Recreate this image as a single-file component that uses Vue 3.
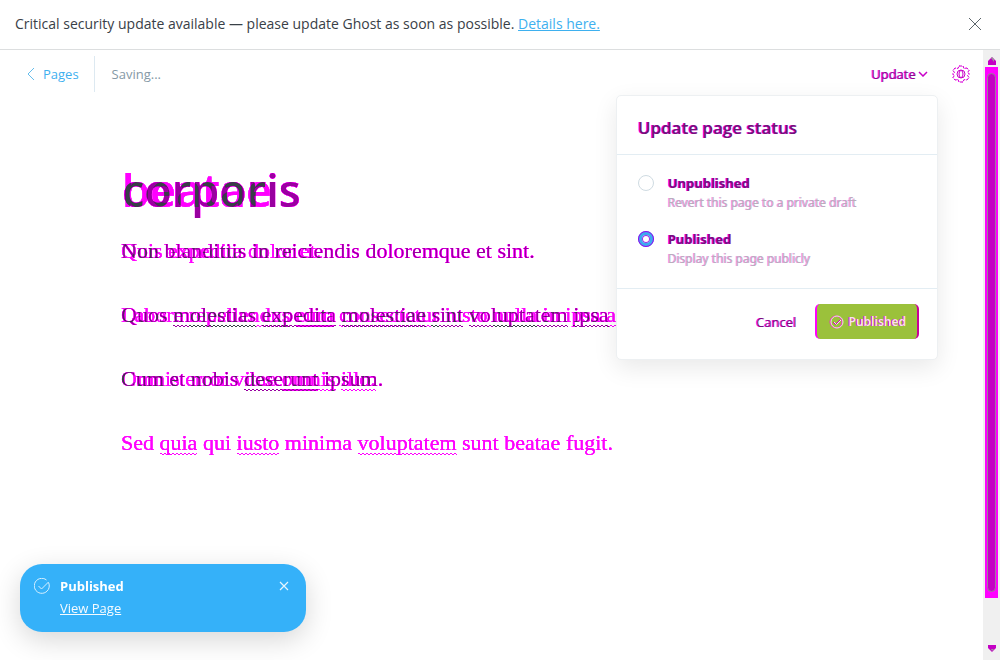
<script setup>
import { ref } from 'vue'

const status = ref('published')
const options = [
  { id: 'unpublished', label: 'Unpublished', note: 'Revert this page to a private draft' },
  { id: 'published', label: 'Published', note: 'Display this page publicly' },
]

// Words starting with "~" carry a spelling mark.
const lines = [
  { back: 'Quis expedita dolor et.', front: 'Non blanditiis in reiciendis doloremque et sint.' },
  {
    back: 'Labore ~repellendus ~eum ~consectetur iusto ~nulla in ipsa ~alias',
    front: 'Quos ~molestias ~expedita ~molestiae ~sint ~voluptatem ~ipsa',
  },
  { back: 'Omnis error vitae ~omnis ~illo.', front: 'Cum et nobis ~deserunt ipsum.' },
  { back: 'Sed ~quia qui ~iusto minima ~voluptatem sunt beatae fugit.', front: '' },
]
const words = (text) =>
  text.split(' ').map((w) => ({ text: w.replace('~', ''), marked: w.startsWith('~') }))
</script>

<template>
  <div class="page">
    <svg class="defs" aria-hidden="true">
      <filter id="ink" x="0" y="0" width="100%" height="100%" color-interpolation-filters="sRGB">
        <feComponentTransfer>
          <feFuncR type="table" tableValues="0 .1 .22 .6 1 1" />
          <feFuncG type="table" tableValues="0 0 .1 .25 1" />
          <feFuncB type="table" tableValues="0 .1 .28 .63 1 1" />
        </feComponentTransfer>
      </filter>
    </svg>

    <aside class="alert">
      <p>Critical security update available — please update Ghost as soon as possible. <a href="#">Details here.</a></p>
      <button class="bare" aria-label="Close alert">
        <svg width="14" height="14" viewBox="0 0 14 14"><path d="M1 1 13 13M13 1 1 13" fill="none" stroke="#5c666b" /></svg>
      </button>
    </aside>

    <div class="body">
      <main class="editor">
        <header class="bar">
          <a class="back" href="#">
            <svg width="8" height="14" viewBox="0 0 8 14"><path d="M7 1 1 7l6 6" fill="none" stroke="#65bdec" /></svg>Pages</a>
          <span class="saving">Saving...</span>
          <div class="actions">
            <button class="bare update">Update
              <svg width="10" height="6" viewBox="0 0 10 6"><path d="M1 1l4 4 4-4" fill="none" stroke="#c800c8" stroke-width="1.500" /></svg>
            </button>
            <button class="bare gear" aria-label="Settings">
              <svg width="20" height="18" viewBox="0 0 20 18" fill="none" stroke="#c800c8">
                <path d="M8 1h4l1 2.500 3-.5 2 2.500-1.500 2 2 1.500-2 1.500 1.500 2-2 2.500-3-.5-1 2.500H8l-1-2.500-3 .5-2-2.500 1.500-2-2-1.500 2-1.500-1.500-2 2-2.500 3 .5z" stroke-dasharray="3 1" />
                <path d="M8 1h4l1 2.500 3-.5 2 2.500-1.500 2 2 1.500-2 1.500 1.500 2-2 2.500-3-.5-1 2.500H8l-1-2.500-3 .5-2-2.500 1.500-2-2-1.500 2-1.500-1.500-2 2-2.500 3 .5z" stroke="#ff00ff" stroke-dasharray="1 3" />
                <ellipse cx="10" cy="9" rx="4" ry="4" /><ellipse cx="10" cy="9" rx="2" ry="3.5" />
              </svg>
            </button>

            <form class="menu" @submit.prevent>
              <h2>Update page status</h2>
              <div class="options">
                <label v-for="o in options" :key="o.id" class="option">
                  <input v-model="status" type="radio" name="status" :value="o.id" />
                  <span><b>{{ o.label }}</b><small>{{ o.note }}</small></span>
                </label>
              </div>
              <footer>
                <button type="button" class="bare cancel">Cancel</button>
                <button class="publish">
                  <svg width="15" height="14" viewBox="0 0 15 14" fill="none">
                    <ellipse cx="7" cy="7" rx="6" ry="6" stroke="#ff20d8" /><ellipse cx="8" cy="7" rx="6" ry="6" stroke="#f0e4e4" />
                    <path d="M4 7l2.500 2.500L11 5" stroke="#d400b0" /><path d="M5 7l2.500 2.500L12 5" stroke="#f4e8ee" />
                  </svg>Published</button>
              </footer>
            </form>
          </div>
        </header>

        <article>
          <h1 class="stack"><span class="under">beatae</span><span class="over">corporis</span></h1>
          <p v-for="(line, i) in lines" :key="i" class="stack">
            <span class="under"><template v-for="(w, k) in words(line.back)" :key="k"><span :class="{ marked: w.marked }">{{ w.text }}</span>{{ ' ' }}</template></span>
            <span class="over"><template v-for="(w, k) in words(line.front)" :key="k"><span :class="{ marked: w.marked }">{{ w.text }}</span>{{ ' ' }}</template></span>
          </p>
        </article>
      </main>

      <div class="scroll" aria-hidden="true">
        <svg width="10" height="9" viewBox="0 0 10 9"><path d="M5 0 9 4v4H1V4z" fill="#c400c4" /><path d="M5 0 7 2v3L4 1z" fill="#999" /></svg>
        <div class="track"><div class="thumb"><i></i></div></div>
        <svg width="10" height="9" viewBox="0 0 10 9"><path d="M1 1h8v3L5 8 1 4z" fill="#c400c4" /><path d="M4 5h3L5 7z" fill="#999" /></svg>
      </div>
    </div>

    <section class="toast" role="status">
      <svg width="16" height="16" viewBox="0 0 16 16" fill="none" stroke="#d8f0ff"><path d="M14.500 4.500A7.500 7.500 0 1 1 12.500 2M4.500 8l3 3 7-7" /></svg>
      <div class="message"><b>Published</b><a href="#">View Page</a></div>
      <button class="bare" aria-label="Dismiss">
        <svg width="10" height="10" viewBox="0 0 10 10"><path d="M1 1 9 9M9 1 1 9" fill="none" stroke="#e4f5ff" stroke-width="1.200" /></svg>
      </button>
    </section>
  </div>
</template>

<style>
body { margin: 0; background: #fff; }
</style>

<style scoped>
.page { min-height: 100vh; display: flex; flex-direction: column; font: 13px/20px "Open Sans", "Noto Sans", sans-serif; color: #394047; overflow: hidden; }
.page * { box-sizing: border-box; }
.defs { position: absolute; width: 0; height: 0; }
h1, h2, p { margin: 0; }
.bare { border: 0; background: none; padding: 0; font: inherit; color: inherit; display: flex; align-items: center; }
.alert { height: 50px; display: flex; align-items: center; justify-content: space-between; padding: 0 18px 2px 15px; border-bottom: 1px solid #dcdedf; font-size: 14px; }
.alert a { color: #3eb0ef; }
.body { flex: 1; display: flex; }
.editor { flex: 1; min-width: 0; }
.bar { display: flex; align-items: center; height: 48px; padding: 0 12px 0 27px; }
.back { display: flex; align-items: center; gap: 8px; height: 36px; padding-right: 15px; border-right: 1px solid #dde9f1; color: #3eb0ef; text-decoration: none; }
.saving { margin-left: 17px; color: #8599a6; }
.actions { margin-left: auto; display: flex; align-items: center; gap: 23px; position: relative; }
.update { gap: 2px; color: #86108e; text-shadow: -1px 0 #ff00ff; }
.menu { position: absolute; z-index: 2; top: 31px; right: 33px; width: 322px; background: #fff; border: 1px solid #edf0f2; border-radius: 5px; box-shadow: 0 8px 24px rgba(0, 0, 0, .09); }
.menu h2 { padding: 19px 21px 14px; font-size: 17px; line-height: 25px; font-weight: 600; color: #6d1576; text-shadow: -1px 0 #ff00ff; border-bottom: 1px solid #e3edf3; }
.options { display: grid; gap: 16px; padding: 18px 21px 19px; font-family: "Noto Sans", sans-serif; }
.option { display: flex; gap: 14px; }
.option span { display: grid; }
.option b { font-weight: 700; color: #761080; text-shadow: -1px 0 #ff00ff; }
.option small { font-size: 12px; color: #b9adbc; text-shadow: -1px 0 #f38cf3; }
.option input { appearance: none; margin: 2px 0 0; width: 16px; height: 16px; flex: none; border: 1px solid #cfdbe2; border-radius: 50%; }
.option input:checked { border: 4px solid #3eaaef; background: #fff; box-shadow: inset 0 0 0 1px #a520e8; outline: 1px solid #9d00f0; outline-offset: -1px; }
.menu footer { display: flex; align-items: center; justify-content: flex-end; gap: 18px; padding: 15px 18px 20px; border-top: 1px solid #e3edf3; }
.cancel { color: #76107d; text-shadow: -1px 0 #ff00ff; }
.publish { display: flex; align-items: center; gap: 5px; height: 35px; padding: 0 11px 0 12px; border: 0; border-left: 2px solid #ff00ff; border-right: 2px solid #c90098; border-radius: 5px; background: #9bc13b; color: #f5e5ed; font: 600 12px/20px "Noto Sans", sans-serif; text-shadow: -1px 0 #e000b8; }
article { padding: 61px 0 0 121px; width: 617px; white-space: nowrap; overflow: hidden; }
.stack { display: grid; background: #fff; isolation: isolate; filter: url(#ink); }
.stack > span { grid-area: 1 / 1; }
.under { color: rgb(204, 64, 204); }
.over { color: rgb(102, 255, 102); mix-blend-mode: difference; }
h1.stack { font-size: 45px; line-height: 62px; font-weight: 600; padding-left: 1px; }
p.stack { font: 22px/32px "Liberation Serif", serif; padding: 14px 0 18px; }
.marked {
  background-image:
    repeating-linear-gradient(90deg, currentColor 0 2px, transparent 2px 4px),
    repeating-linear-gradient(90deg, transparent 0 2px, currentColor 2px 4px);
  background-size: 100% 1px;
  background-position: 0 calc(100% - 1px), 0 100%;
  background-repeat: no-repeat;
}
.scroll { width: 17px; background: #f0f0f0; display: flex; flex-direction: column; align-items: center; padding: 7px 0 6px; }
.scroll svg { margin-bottom: 1px; }
.track { flex: 1; width: 13px; }
.thumb { height: 92%; background: #ff00ff; padding: 6px 2px; }
.thumb i { display: block; height: 100%; border: 1px solid #9a829a; border-radius: 5px; background: #c400c4; }
.toast { position: fixed; left: 20px; bottom: 28px; width: 286px; display: flex; align-items: flex-start; gap: 10px; padding: 11px 17px 13px 14px; border-radius: 22px; background: #35b1f9; color: #fff; box-shadow: 0 8px 28px rgba(0, 0, 0, .16); }
.toast > svg { margin-top: 3px; }
.message { flex: 1; display: grid; justify-items: start; line-height: 22px; }
.message b { font-weight: 700; }
.message a { color: #f5fbff; font-size: 13px; }
.toast > button { margin-top: 6px; }
</style>
